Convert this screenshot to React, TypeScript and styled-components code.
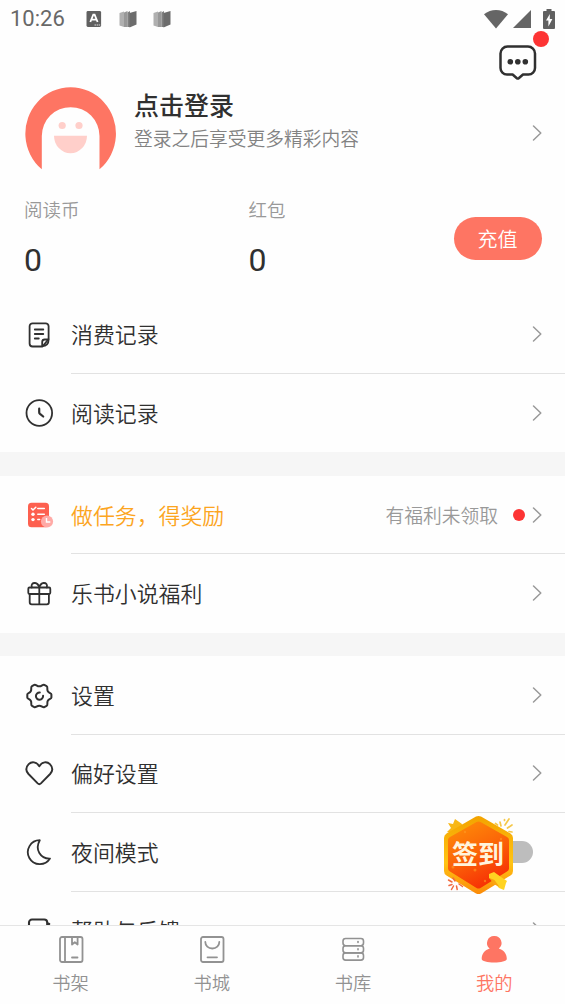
import React from 'react';
import styled, { createGlobalStyle } from 'styled-components';

const GlobalStyle = createGlobalStyle`
  * { box-sizing: border-box; }
  body {
    margin: 0;
    overflow: hidden;
    background: #fff;
    font-family: 'Noto Sans CJK SC', 'Noto Sans', sans-serif;
    font-weight: 350;
  }
  svg { display: block; flex: none; overflow: visible; }
`;

const Screen = styled.div`
  position: relative;
  display: flex;
  flex-direction: column;
  height: 100vh;
  overflow: hidden;
  background: #fefefe;
  color: #303030;
`;

const StatusBar = styled.div`
  display: flex;
  flex: none;
  align-items: center;
  height: 38px;
  padding: 0 10px;
  color: #686868;
`;

const Clock = styled.span`
  width: 76px;
  font: 450 22px/40px Roboto, sans-serif;
`;

const StatusIcons = styled.div`
  display: flex;
  align-items: center;
  gap: 17px;
  flex: 1;
`;

const Signals = styled.div`
  display: flex;
  align-items: center;
`;

const Toolbar = styled.div`
  display: flex;
  flex: none;
  justify-content: flex-end;
  height: 46px;
  padding: 6px 27px 0 0;
`;

const MessageButton = styled.div`
  position: relative;
  width: 39px;
  height: 37px;
`;

const Dot = styled.span<{ $size: number }>`
  flex: none;
  width: ${(p) => p.$size}px;
  height: ${(p) => p.$size}px;
  border-radius: 50%;
  background: #fd3434;
`;

const UnreadDot = styled(Dot)`
  position: absolute;
  top: -13px;
  right: -11px;
`;

const Profile = styled.div`
  display: flex;
  flex: none;
  height: 100px;
  padding: 3px 22px 0 25px;
`;

const ProfileText = styled.div`
  flex: 1;
  padding-left: 18px;
`;

const ProfileName = styled.div`
  height: 34px;
  font-size: 25px;
  font-weight: 500;
  line-height: 34px;
`;

const ProfileHint = styled.div`
  color: #828282;
  font-size: 18.75px;
  line-height: 34px;
`;

const ProfileArrow = styled.div`
  padding-top: 37px;
`;

const Wallet = styled.div`
  display: flex;
  flex: none;
  height: 111.6px;
  padding: 12px 23px 0 24px;
`;

const Balance = styled.div`
  flex: none;
  width: 224.5px;
`;

const BalanceLabel = styled.div`
  color: #999;
  font-size: 18.5px;
  line-height: 27px;
`;

const BalanceValue = styled.div`
  margin-top: 18px;
  font: 400 32px/38px Roboto, sans-serif;
`;

const RechargeButton = styled.div`
  flex: none;
  width: 88px;
  height: 43px;
  margin: 21px 0 0 -19.5px;
  border-radius: 22px;
  background: #fe7563;
  color: #fff;
  font-size: 20px;
  line-height: 43px;
  text-align: center;
`;

const Content = styled.main`
  display: flex;
  flex: 1;
  flex-direction: column;
  min-height: 0;
  overflow: hidden;
`;

const Section = styled.section`
  flex: none;
`;

const SectionGap = styled.div`
  flex: none;
  height: 23.6px;
  background: #f6f6f6;
`;

const Row = styled.div`
  display: flex;
  height: 78.4px;
  padding-left: 25px;
`;

const RowIcon = styled.div`
  display: flex;
  align-items: center;
  width: 46px;
`;

const RowBody = styled.div<{ $divider: boolean }>`
  display: flex;
  flex: 1;
  align-items: center;
  padding-right: 22.5px;
  border-bottom: 1px solid ${(p) => (p.$divider ? '#e2e2e2' : 'transparent')};
`;

const RowTitle = styled.span<{ $highlight?: boolean }>`
  flex: 1;
  color: ${(p) => (p.$highlight ? '#fca51f' : '#303030')};
  font-size: 21.9px;
  line-height: 32px;
`;

const RowNote = styled.span`
  margin-right: 15px;
  color: #999;
  font-size: 18.75px;
  line-height: 27px;
`;

const RowArrow = styled.span`
  margin-left: 5.5px;
`;

const Switch = styled.div`
  width: 44px;
  height: 22px;
  margin-right: 9.5px;
  border-radius: 11px;
  background: #bdbdbd;
`;

const TabBar = styled.nav`
  display: flex;
  flex: none;
  height: 79px;
  border-top: 1px solid #e5e5e5;
  background: #fefefe;
`;

const Tab = styled.div<{ $active?: boolean }>`
  display: flex;
  flex: 1;
  flex-direction: column;
  align-items: center;
  padding-top: 8px;
  color: ${(p) => (p.$active ? '#fe7563' : '#929292')};
  font-size: 18.3px;
  line-height: 27px;
  svg { margin-bottom: 5px; }
`;

const CheckIn = styled.div`
  position: absolute;
  top: 814px;
  left: 440px;
  width: 78px;
  height: 82px;
`;

const CheckInLabel = styled.span`
  position: absolute;
  top: 19px;
  left: 12px;
  color: #fff4dc;
  font-size: 26px;
  font-weight: 700;
  line-height: 39px;
  white-space: nowrap;
`;

const line = {
  fill: 'none',
  stroke: 'currentColor',
  strokeWidth: 1.8,
  strokeLinecap: 'round',
  strokeLinejoin: 'round',
} as const;

const Arrow = () => (
  <svg width="12" height="18" viewBox="0 0 12 18" {...line} stroke="#999" strokeWidth={1.5}>
    <path d="M2.500 2l7.300 7-7.300 7" />
  </svg>
);

const KeyboardIcon = () => (
  <svg width="16" height="17" viewBox="0 0 16 17">
    <rect x="0.5" y="0" width="14.6" height="16" rx="1.4" fill="#606060" />
    <path d="M4.300 11 7.300 3.700h1.300l3 7.300M5.400 8.700h5" fill="none" stroke="#fff" strokeWidth="1.800" />
    <path d="M8.500 14h6" stroke="#ddd" strokeWidth="1.200" strokeDasharray="1.500 .6" />
  </svg>
);

const CardsIcon = () => (
  <svg width="17" height="18" viewBox="0 0 17 18">
    <path d="M.5 3 5 1.500v15.500L.5 15.500z" fill="#b0b0b0" />
    <path d="M5 2.500 8.500 1v16H5z" fill="#989898" />
    <path d="M8.500 2.500 11 1v16H8.500z" fill="#808080" />
    <path d="M10.500 3 17.500 1v13.500l-7 3z" fill="#6c6c6c" />
  </svg>
);

const WifiIcon = () => (
  <svg width="24" height="19" viewBox="0 0 24 19">
    <path d="M0 4.300C7-1.400 17-1.400 24 4.300L12 18.600z" fill="#656565" />
  </svg>
);

const CellIcon = styled.svg`
  margin-left: 5px;
`;

const BatteryIcon = styled.svg`
  margin-left: 12px;
`;

const MessageIcon = () => (
  <svg width="39" height="37" viewBox="0 0 39 37" {...line} strokeWidth={2.500}>
    <path d="M8.500 2.500h20.500a7 7 0 0 1 7 7v14.500a6.500 6.500 0 0 1-6.500 6.500h-5.500l-4 3.500q-1.200 1-2.400 0l-4-3.500H8a6.500 6.500 0 0 1-6.500-6.500V9.500a7 7 0 0 1 7-7z" />
    <g fill="currentColor" stroke="none">
      <circle cx="11.300" cy="17.700" r="2.800" />
      <circle cx="18.800" cy="17.700" r="2.800" />
      <circle cx="26.300" cy="17.700" r="2.800" />
    </g>
  </svg>
);

const Avatar = () => (
  <svg width="91" height="83" viewBox="0 0 91 83">
    <path d="M16.800 82.300A45.300 46.300 0 1 1 74.500 82.300V49a28.850 28.850 0 0 0-57.700 0z" fill="#fe7563" />
    <circle cx="37.200" cy="38.500" r="3.600" fill="#ffcfca" />
    <circle cx="54" cy="38.500" r="3.600" fill="#ffcfca" />
    <path d="M29 48.800h33a16.500 17.400 0 0 1-33 0z" fill="#ffcfca" />
  </svg>
);

const NoteIcon = () => (
  <svg width="28" height="28" viewBox="0 0 28 28" {...line}>
    <path d="M23.600 18V5.300a3 3 0 0 0-3-3H7.600a3 3 0 0 0-3 3v17.200a3 3 0 0 0 3 3h9.900z" />
    <path d="M17.200 25v-4a2.500 2.500 0 0 1 2.500-2.500h3.900c0 4-2 6.500-6.400 6.500M9.800 8.500h8.500M9.800 13h8.500M9.800 17.500h4" />
  </svg>
);

const ClockIcon = () => (
  <svg width="28" height="28" viewBox="0 0 28 28" {...line}>
    <circle cx="14.300" cy="14" r="12.800" />
    <path d="M14.200 9.700v3.500q0 1 .8 1.700l3.200 2.600" strokeWidth="2.200" />
  </svg>
);

const TaskIcon = () => (
  <svg width="28" height="28" viewBox="0 0 28 28">
    <rect x="3" y="1.700" width="21" height="24.500" rx="3.500" fill="#fd604f" />
    <g fill="none" stroke="#fff" strokeWidth="1.500" strokeLinecap="round">
      <path d="M6.500 7.500 8 9l2.800-2.800M12.800 7.500h6.500M12.800 13.200h6.500M12.800 18.500h1.800" />
    </g>
    <circle cx="8" cy="13.200" r="1.700" fill="#fff" />
    <circle cx="8" cy="18.600" r="1.700" fill="#fff" />
    <circle cx="22" cy="20.500" r="6.100" fill="#ffaaa6" />
    <path d="M21.500 17v4h3.800" fill="none" stroke="#fff" strokeWidth="1.400" />
  </svg>
);

const GiftIcon = () => (
  <svg width="28" height="28" viewBox="0 0 28 28" {...line}>
    <rect x="3.300" y="7.500" width="22" height="6.500" rx="1.200" />
    <path d="M4.700 14v8.300a2 2 0 0 0 2 2h15.200a2 2 0 0 0 2-2V14M14.300 7.500v16.800M6.800 7.500C6 4.500 7.500 2.800 10 3c2.300.3 3.700 2.200 4.300 4.500.6-2.300 2-4.200 4.300-4.500 2.500-.2 4 1.500 3.200 4.500" />
  </svg>
);

const GearIcon = () => (
  <svg width="28" height="28" viewBox="0 0 28 28" {...line} strokeWidth={2}>
    <path d="M9.300 2.800c1.500-.8 2.500 1.500 5 1.500s3.500-2.300 5-1.500l2.300 1.300c1.700 1-.1 2.900 1.200 5.100s3.600 1.700 3.600 3.300v3c0 1.600-2.400 1.100-3.600 3.300s.5 4.100-1.200 5.100l-2.300 1.300c-1.500.8-2.500-1.500-5-1.500s-3.500 2.300-5 1.500L7 23.900c-1.700-1 .1-2.900-1.200-5.100S2.300 17.100 2.300 15.500v-3c0-1.600 2.300-1.100 3.500-3.300S5.300 5.100 7 4.100z" />
    <path d="M14.800 10.500a3.600 3.600 0 1 0 3.300 3.200" />
  </svg>
);

const HeartIcon = () => (
  <svg width="28" height="28" viewBox="0 0 28 28" {...line} strokeWidth={1.900}>
    <path d="M14.300 6.300C11.500 1.600 6.600 1.200 3.700 4.200.7 7.300.8 11 3.500 14l9.200 9.400q1.600 1.500 3.200 0l9.200-9.400c2.700-3 2.800-6.700-.2-9.800-2.900-3-7.800-2.600-10.600 2.100z" />
  </svg>
);

const MoonIcon = () => (
  <svg width="28" height="28" viewBox="0 0 28 28" {...line}>
    <path d="M14.800 2.200A12 12 0 1 0 25 20.600C15.500 21 9.500 11.500 14.800 2.200z" />
  </svg>
);

const HelpIcon = () => (
  <svg width="28" height="28" viewBox="0 0 28 28" {...line} strokeWidth={2.100}>
    <path d="M4 26V5.500a3 3 0 0 1 3-3h12.200a3 3 0 0 1 3 3V26M22.200 6l2 1" />
  </svg>
);

const ShelfIcon = () => (
  <svg width="28" height="30" viewBox="0 0 28 30" {...line}>
    <rect x="3" y="3" width="22.500" height="25" rx="2" />
    <path d="M8 3.500v24.500M15 3.500v7l2.800-2.200 2.800 2.200v-7M15 23.500h5.500" />
  </svg>
);

const StoreIcon = () => (
  <svg width="28" height="30" viewBox="0 0 28 30" {...line}>
    <rect x="3" y="3" width="22.500" height="25" rx="2" />
    <path d="M7.300 8c0 3.800 3 6.500 7 6.500s7-2.700 7-6.500M9.500 23.300h9.500" />
  </svg>
);

const LibraryIcon = () => (
  <svg width="28" height="30" viewBox="0 0 28 30" {...line} strokeWidth={1.600}>
    {[4.500, 11.700, 18.900].map((y) => (
      <React.Fragment key={y}>
        <rect x="4" y={y} width="20.500" height="7.200" rx="2.600" />
        <path d={`M19 ${y + 3}v1`} />
      </React.Fragment>
    ))}
  </svg>
);

const MineIcon = () => (
  <svg width="28" height="30" viewBox="0 0 28 30" fill="currentColor">
    <path d="M14.200 2a7 7 0 0 1 4.600 12.500c4.800 1.400 8 5.400 8 10.400 0 2-6 3.500-12.600 3.500S1.700 26.900 1.700 24.900c0-5 3.200-9 8-10.400a7 7 0 0 1 4.500-12.500z" />
  </svg>
);

const CheckInBadge = () => (
  <CheckIn>
    <svg width="78" height="82" viewBox="0 0 78 82">
      <defs>
        <linearGradient id="rim" x1="0" y1="0" x2="0" y2="1">
          <stop offset="0" stopColor="#f3a300" />
          <stop offset=".6" stopColor="#ffc414" />
          <stop offset="1" stopColor="#fb8a08" />
        </linearGradient>
        <linearGradient id="face" x1="0" y1="0" x2=".45" y2="1">
          <stop offset="0" stopColor="#ff9108" />
          <stop offset=".55" stopColor="#fb6508" />
          <stop offset="1" stopColor="#f73405" />
        </linearGradient>
      </defs>
      <path d="M8 9l5 1 2-5 7 5-1 8-8 6-2-5-4-1 4-4z" fill="#f8b715" />
      <path d="M36 2.500q2.500-1.200 5 0l29.500 17q2.500 1.500 2.500 4.500v33q0 3-2.500 4.500l-29.500 18q-2.500 1.200-5 0L6.500 61.500Q4 60 4 57V24Q4 21 6.500 19.500z" fill="url(#rim)" />
      <path d="M36.500 8q2-1 4 0L67 23q2 1 2 3v28.500q0 2-2 3l-26.500 16.500q-2 1-4 0L10 57.500q-2-1-2-3V26q0-2 2-3z" fill="url(#face)" />
      <g fill="#ff9b25" opacity=".6">
        <circle cx="25" cy="18" r="1.200" />
        <circle cx="13" cy="53" r="1.500" />
        <circle cx="35" cy="56" r="1.500" />
        <circle cx="45" cy="67" r="1.200" />
        <circle cx="61" cy="25" r="1.200" />
      </g>
      <path d="M49 60l5-2 7 5 6 4-1 2-2 7-5-2-5-6-5-4z" fill="#ffd321" />
      <path d="M49.500 64l5 2 5 7-6-3z" fill="#f9a510" />
      <g fill="none" stroke="#f5c84a" strokeWidth="1.700" strokeLinecap="round">
        <path d="M61 12l-1-4M65 11l4-6M67.500 14l4.500-3M69 17.500l3 .5M57.500 11l-2-1.500M64.500 6.500v-1" />
      </g>
      <g fill="none" stroke="#f06a40" strokeWidth="1.500" strokeLinecap="round">
        <path d="M8.500 66l3.500 2M9 71.500l3-1M11.500 75.500l2-3.500M16.500 72l.7 3.500M19 70l3.500 2.500M13 64l2 3" />
      </g>
    </svg>
    <CheckInLabel>签到</CheckInLabel>
  </CheckIn>
);

type MenuRowProps = {
  icon: React.ReactNode;
  title: string;
  highlight?: boolean;
  divider?: boolean;
  note?: string;
  toggle?: boolean;
};

const MenuRow = ({ icon, title, highlight, divider = false, note, toggle }: MenuRowProps) => (
  <Row>
    <RowIcon>{icon}</RowIcon>
    <RowBody $divider={divider}>
      <RowTitle $highlight={highlight}>{title}</RowTitle>
      {note && (
        <>
          <RowNote>{note}</RowNote>
          <Dot $size={12} />
        </>
      )}
      {toggle ? <Switch /> : <RowArrow><Arrow /></RowArrow>}
    </RowBody>
  </Row>
);

export default function App() {
  return (
    <Screen>
      <GlobalStyle />
      <StatusBar>
        <Clock>10:26</Clock>
        <StatusIcons>
          <KeyboardIcon />
          <CardsIcon />
          <CardsIcon />
        </StatusIcons>
        <Signals>
          <WifiIcon />
          <CellIcon width="18" height="18" viewBox="0 0 18 18">
            <path d="M18 0v18H0z" fill="#656565" />
          </CellIcon>
          <BatteryIcon width="12" height="20" viewBox="0 0 12 20">
            <path d="M3.500 0h5v2H11a1 1 0 0 1 1 1v16a1 1 0 0 1-1 1H1a1 1 0 0 1-1-1V3a1 1 0 0 1 1-1h2.500z" fill="#606060" />
            <path d="M6.800 5 3 11.500h2.400V17.500L9.400 10H6.800z" fill="#fff" />
          </BatteryIcon>
        </Signals>
      </StatusBar>
      <Toolbar>
        <MessageButton>
          <MessageIcon />
          <UnreadDot $size={16} />
        </MessageButton>
      </Toolbar>
      <Content>
        <Profile>
          <Avatar />
          <ProfileText>
            <ProfileName>点击登录</ProfileName>
            <ProfileHint>登录之后享受更多精彩内容</ProfileHint>
          </ProfileText>
          <ProfileArrow><Arrow /></ProfileArrow>
        </Profile>
        <Wallet>
          <Balance>
            <BalanceLabel>阅读币</BalanceLabel>
            <BalanceValue>0</BalanceValue>
          </Balance>
          <Balance>
            <BalanceLabel>红包</BalanceLabel>
            <BalanceValue>0</BalanceValue>
          </Balance>
          <RechargeButton>充值</RechargeButton>
        </Wallet>
        <Section>
          <MenuRow icon={<NoteIcon />} title="消费记录" divider />
          <MenuRow icon={<ClockIcon />} title="阅读记录" />
        </Section>
        <SectionGap />
        <Section>
          <MenuRow icon={<TaskIcon />} title="做任务，得奖励" highlight divider note="有福利未领取" />
          <MenuRow icon={<GiftIcon />} title="乐书小说福利" />
        </Section>
        <SectionGap />
        <Section>
          <MenuRow icon={<GearIcon />} title="设置" divider />
          <MenuRow icon={<HeartIcon />} title="偏好设置" divider />
          <MenuRow icon={<MoonIcon />} title="夜间模式" divider toggle />
          <MenuRow icon={<HelpIcon />} title="帮助与反馈" />
        </Section>
      </Content>
      <TabBar>
        <Tab><ShelfIcon />书架</Tab>
        <Tab><StoreIcon />书城</Tab>
        <Tab><LibraryIcon />书库</Tab>
        <Tab $active><MineIcon />我的</Tab>
      </TabBar>
      <CheckInBadge />
    </Screen>
  );
}
